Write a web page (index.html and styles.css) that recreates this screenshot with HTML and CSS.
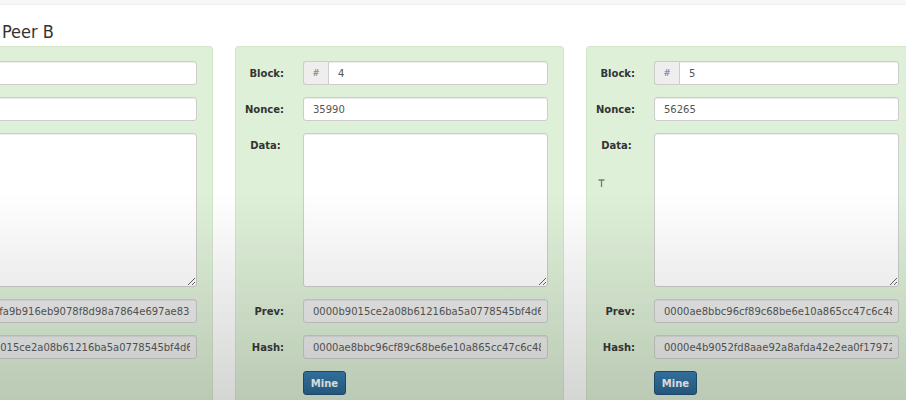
FILE: index.html
```html
<!DOCTYPE html>
<html lang="en">
<head>
    <meta charset="UTF-8">
    <meta name="viewport" content="width=device-width, initial-scale=1.0">
    <title>Blockchain - Peer B</title>
    <link rel="stylesheet" href="styles.css">
</head>
<body>

    <div class="topbar"></div>

    <h3 class="peer-title">Peer B</h3>

    <div class="chain">

        <div class="block-card">
            <div class="row">
                <label>Block:</label>
                <div class="input-group">
                    <span class="addon">#</span>
                    <input type="text" value="3">
                </div>
            </div>
            <div class="row">
                <label>Nonce:</label>
                <input type="text" value="8071">
            </div>
            <div class="row">
                <label class="top">Data:</label>
                <textarea></textarea>
            </div>
            <div class="row">
                <label>Prev:</label>
                <input type="text" class="readonly" value="00006cfa9b916eb9078f8d98a7864e697ae83d2b1c0f4e5a7d9b3c2e1f0a4b6c" readonly>
            </div>
            <div class="row">
                <label>Hash:</label>
                <input type="text" class="readonly" value="0000b9015ce2a08b61216ba5a0778545bf4d6e1c2f7a3b9e0d4c5a6f7e8b9c0d" readonly>
            </div>
            <div class="row">
                <span></span>
                <div><button class="mine">Mine</button></div>
            </div>
        </div>

        <div class="block-card">
            <div class="row">
                <label>Block:</label>
                <div class="input-group">
                    <span class="addon">#</span>
                    <input type="text" value="4">
                </div>
            </div>
            <div class="row">
                <label>Nonce:</label>
                <input type="text" value="35990">
            </div>
            <div class="row">
                <label class="top">Data:</label>
                <textarea></textarea>
            </div>
            <div class="row">
                <label>Prev:</label>
                <input type="text" class="readonly" value="0000b9015ce2a08b61216ba5a0778545bf4d6e1c2f7a3b9e0d4c5a6f7e8b9c0d" readonly>
            </div>
            <div class="row">
                <label>Hash:</label>
                <input type="text" class="readonly" value="0000ae8bbc96cf89c68be6e10a865cc47c6c48f2d1e3a5b7c9d0e2f4a6b8c1d3" readonly>
            </div>
            <div class="row">
                <span></span>
                <div><button class="mine">Mine</button></div>
            </div>
        </div>

        <div class="block-card">
            <div class="row">
                <label>Block:</label>
                <div class="input-group">
                    <span class="addon">#</span>
                    <input type="text" value="5">
                </div>
            </div>
            <div class="row">
                <label>Nonce:</label>
                <input type="text" value="56265">
            </div>
            <div class="row">
                <label class="top">Data:</label>
                <textarea></textarea>
            </div>
            <div class="row">
                <label>Prev:</label>
                <input type="text" class="readonly" value="0000ae8bbc96cf89c68be6e10a865cc47c6c48f2d1e3a5b7c9d0e2f4a6b8c1d3" readonly>
            </div>
            <div class="row">
                <label>Hash:</label>
                <input type="text" class="readonly" value="0000e4b9052fd8aae92a8afda42e2ea0f179723b5c8d1e6f0a2b4c7d9e1f3a5b" readonly>
            </div>
            <div class="row">
                <span></span>
                <div><button class="mine">Mine</button></div>
            </div>

            <!-- mouse pointer (text cursor) resting over the card -->
            <svg class="ibeam" width="7" height="9" viewBox="0 0 7 9">
                <path d="M0.5 1 H6.5 M3.5 1 V8" stroke="#6f806b" stroke-width="1.3" fill="none"/>
            </svg>
        </div>

    </div>

</body>
</html>
```

FILE: styles.css
```css
body {
    margin: 0;
    background: #fff;
    font-family: "DejaVu Sans", Verdana, sans-serif;
    color: #333;
    overflow: hidden;
    height: 400px;
}
/* darker shade towards the bottom of the screen */
body::after {
    content: "";
    position: fixed;
    top: 0;
    left: 0;
    right: 0;
    bottom: 0;
    pointer-events: none;
    background: linear-gradient(to bottom, rgba(40, 50, 40, 0) 48%, rgba(40, 50, 40, 0.2) 100%);
}
.topbar {
    height: 4px;
    background: #f7f7f7;
    border-bottom: 1px solid #efefef;
}
.peer-title {
    font-family: "DejaVu Sans Condensed", "DejaVu Sans", sans-serif;
    font-weight: normal;
    font-size: 18px;
    color: #333;
    margin: 16px 0 0 2px;
    line-height: 21px;
    height: 21px;
}
.chain {
    display: flex;
    gap: 22px;
    margin-left: -116px;
    margin-top: 4px;
}
.block-card {
    position: relative;
    flex: 0 0 329px;
    box-sizing: border-box;
    height: 354px;
    background: #dff0d8;
    border: 1px solid #d3e6ca;
    border-bottom: none;
    border-radius: 4px 4px 0 0;
    padding: 14px 15px 0 3px;
    display: flex;
    flex-direction: column;
    gap: 12px;
}
.row {
    display: grid;
    grid-template-columns: 45px 1fr;
    column-gap: 19px;
    align-items: center;
}
label {
    font-size: 10px;
    font-weight: bold;
    text-align: right;
    color: #333;
    white-space: nowrap;
}
label.top {
    align-self: start;
    padding-top: 7px;
    text-align: center;
    padding-left: 8px;
}
input, textarea {
    box-sizing: border-box;
    width: 100%;
    height: 24px;
    border: 1px solid #ccc;
    border-radius: 3px;
    background: #fff;
    box-shadow: inset 0 1px 1px rgba(0, 0, 0, 0.075);
    font-family: "DejaVu Sans", Verdana, sans-serif;
    font-size: 10px;
    color: #555;
    padding: 0 6px 0 9px;
    margin: 0;
    outline: none;
}
textarea {
    height: 154px;
    resize: vertical;
    padding-top: 5px;
}
input.readonly {
    background: #eee;
}
.input-group {
    display: flex;
}
.input-group .addon {
    box-sizing: border-box;
    flex: 0 0 25px;
    height: 24px;
    line-height: 22px;
    text-align: center;
    font-size: 9px;
    font-style: italic;
    color: #777;
    background: #eee;
    border: 1px solid #ccc;
    border-right: none;
    border-radius: 3px 0 0 3px;
}
.input-group input {
    border-radius: 0 3px 3px 0;
}
.mine {
    height: 24px;
    width: 43px;
    padding: 0;
    border: 1px solid #1c4d78;
    border-radius: 3px;
    background: linear-gradient(to bottom, #347bb4, #24608f);
    color: #fff;
    font-family: "DejaVu Sans", Verdana, sans-serif;
    font-size: 10px;
    font-weight: bold;
    cursor: pointer;
}
.ibeam {
    position: absolute;
    left: 11px;
    top: 132px;
}
```
